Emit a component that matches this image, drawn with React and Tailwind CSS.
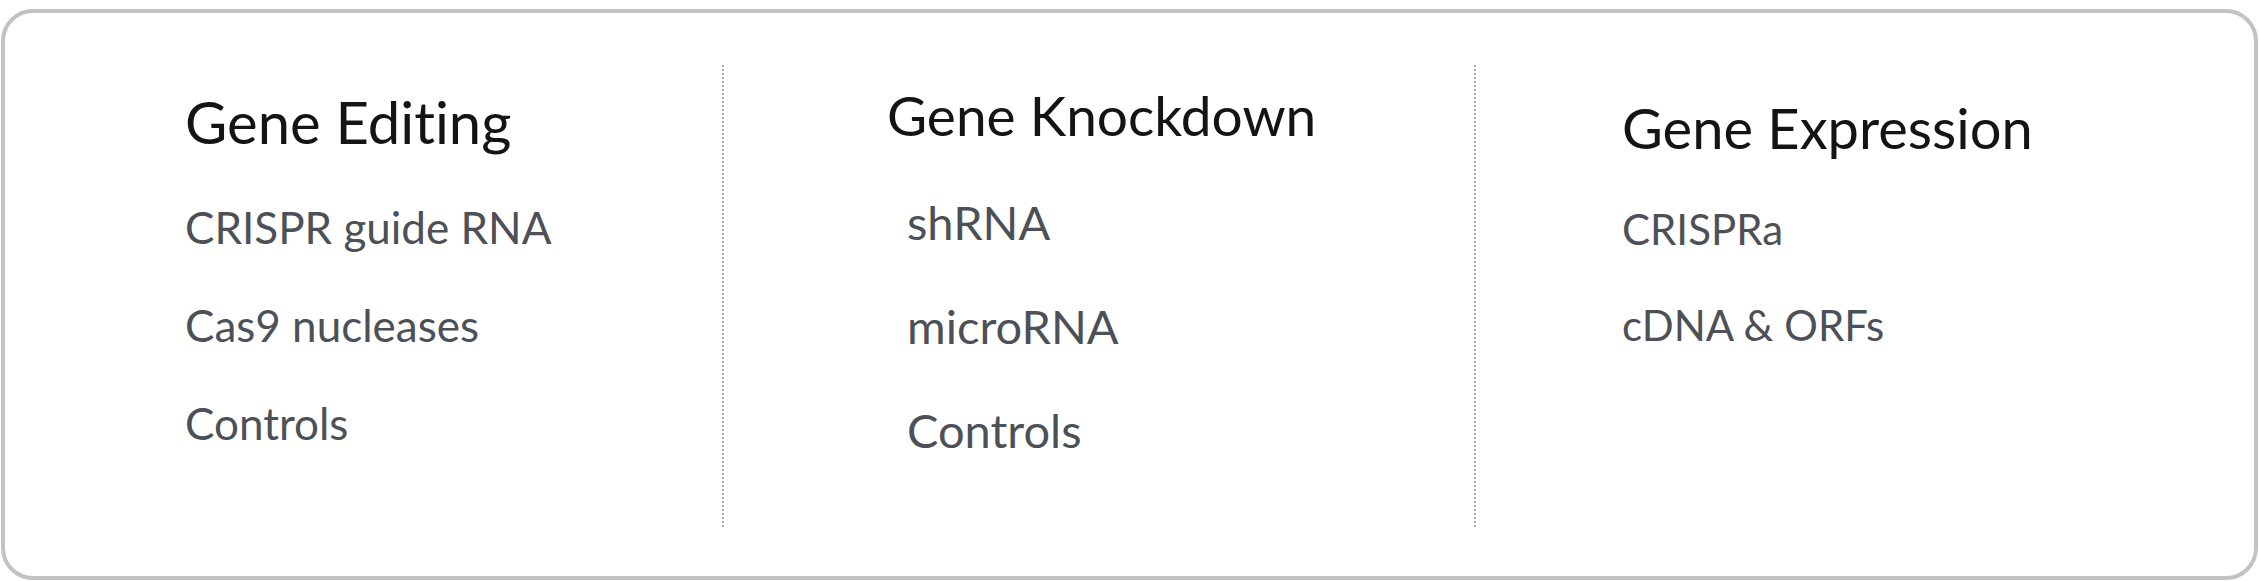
import React from 'react';

const columns = [
  {
    title: 'Gene Editing',
    items: ['CRISPR guide RNA', 'Cas9 nucleases', 'Controls'],
    wrap: 'w-[717px] pl-[180px] pt-[27px]',
    head: 'text-[58px] leading-[60px] mb-[26px]',
    list: 'pl-0',
    item: 'text-[44px] leading-[98px]',
  },
  {
    title: 'Gene Knockdown',
    items: ['shRNA', 'microRNA', 'Controls'],
    wrap: 'w-[750px] pl-[163px] pt-[20px]',
    head: 'text-[55px] leading-[60px] mb-[25px]',
    list: 'pl-[20px]',
    item: 'text-[47px] leading-[104px]',
  },
  {
    title: 'Gene Expression',
    items: ['CRISPRa', 'cDNA & ORFs'],
    wrap: 'flex-1 pl-[146px] pt-[33px]',
    head: 'text-[56px] leading-[60px] mb-[23px]',
    list: 'pl-0',
    item: 'text-[42px] leading-[96px]',
  },
];

const Column = ({ col }) => (
  <div className={col.wrap}>
    <h2 className={`text-[#141414] font-normal whitespace-nowrap ${col.head}`}>{col.title}</h2>
    <ul className={col.list}>
      {col.items.map((item) => (
        <li key={item} className={`text-[#4d5157] whitespace-nowrap ${col.item}`}>
          <a href="#">{item}</a>
        </li>
      ))}
    </ul>
  </div>
);

const App = () => {
  return (
    <div
      className="w-[2259px] h-[581px] bg-white pt-[9px] px-px [font-variant-ligatures:none]"
      style={{ fontFamily: 'Lato, "Open Sans", sans-serif' }}
    >
      <div className="h-[571px] border-4 border-[#c2c2c2] rounded-[32px] bg-white flex items-stretch pt-[52px] pb-[49px]">
        <Column col={columns[0]} />
        <div className="border-l-2 border-dotted border-[#a8a8a8]" />
        <Column col={columns[1]} />
        <div className="border-l-2 border-dotted border-[#a8a8a8]" />
        <Column col={columns[2]} />
      </div>
    </div>
  );
};

export default App;
